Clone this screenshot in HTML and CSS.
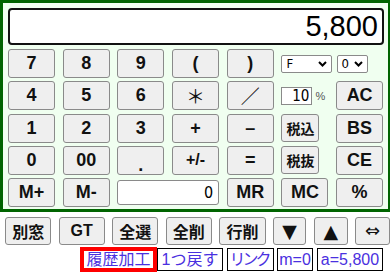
FILE: index.html
```html
<!DOCTYPE html>
<html lang="ja">
<head>
    <meta charset="UTF-8">
    <meta name="viewport" content="width=device-width, initial-scale=1.0">
    <title>電卓</title>
    <link rel="stylesheet" href="styles.css">
</head>
<body>
    <div class="calc">
        <div class="display">5,800</div>
        <div class="keys">
            <button class="key">7</button>
            <button class="key">8</button>
            <button class="key">9</button>
            <button class="key">(</button>
            <button class="key">)</button>
            <div class="opts">
                <select class="sel sel-f"><option>F</option></select>
                <select class="sel sel-n"><option>0</option></select>
            </div>

            <button class="key">4</button>
            <button class="key">5</button>
            <button class="key">6</button>
            <button class="key op">＊</button>
            <button class="key op">／</button>
            <div class="tax"><input class="rate" type="text" value="10"><span class="pct">%</span></div>
            <button class="key">AC</button>

            <button class="key">1</button>
            <button class="key">2</button>
            <button class="key">3</button>
            <button class="key">+</button>
            <button class="key">–</button>
            <div class="cell"><button class="key jp">税込</button></div>
            <button class="key">BS</button>

            <button class="key">0</button>
            <button class="key">00</button>
            <button class="key dot">.</button>
            <button class="key small">+/-</button>
            <button class="key">=</button>
            <div class="cell"><button class="key jp">税抜</button></div>
            <button class="key">CE</button>

            <button class="key">M+</button>
            <button class="key">M-</button>
            <input class="memory" type="text" value="0">
            <button class="key">MR</button>
            <button class="key">MC</button>
            <button class="key">%</button>
        </div>
    </div>

    <div class="tools">
        <button class="tool">別窓</button>
        <button class="tool">GT</button>
        <button class="tool">全選</button>
        <button class="tool">全削</button>
        <button class="tool">行削</button>
        <button class="tool arrow w1">▼</button>
        <button class="tool arrow w2">▲</button>
        <button class="tool swap">⇔</button>
    </div>

    <div class="links">
        <span class="link hot">履歴加工</span>
        <span class="link undo">1つ戻す</span>
        <span class="link url">リンク</span>
        <span class="link mem">m=0</span>
        <span class="link ans">a=5,800</span>
    </div>
</body>
</html>
```

FILE: styles.css
```css
body{
    margin: 0;
    background: #fff;
    font-family: "Liberation Sans", "Noto Sans CJK JP", sans-serif;
}
.calc{
    width: 391px;
    box-sizing: border-box;
    border: 3px solid #006400;
    background: #f0fff0;
    padding: 5px 4px 2px 5px;
}
.display{
    height: 37px;
    box-sizing: border-box;
    border: 2px solid #111;
    border-radius: 4px;
    background: #fff;
    text-align: right;
    font-size: 29px;
    line-height: 33px;
    padding-right: 4px;
    color: #000;
}
.keys{
    display: grid;
    grid-template-columns: repeat(7, 47px);
    grid-auto-rows: 29px;
    column-gap: 7.7px;
    row-gap: 3.25px;
    margin-top: 4px;
}
.key{
    margin: 0;
    padding: 0;
    background: #efefef;
    border: 1px solid #8a8a8a;
    border-radius: 3px;
    font-family: "Liberation Sans", "Noto Sans CJK JP", sans-serif;
    font-weight: bold;
    font-size: 18px;
    color: #111;
}
.op{
    font-weight: normal;
    font-size: 19px;
}
.dot{
    padding-top: 8px;
}
.small{
    font-size: 16px;
}
.opts{
    grid-column: 6 / 8;
    display: flex;
    align-items: center;
    gap: 5px;
}
.sel{
    appearance: none;
    -webkit-appearance: none;
    height: 18px;
    box-sizing: border-box;
    border: 1px solid #8a8a8a;
    border-radius: 2px;
    background: #fff url("data:image/svg+xml,%3Csvg xmlns='http://www.w3.org/2000/svg' width='9' height='6' viewBox='0 0 9 6'%3E%3Cpath d='M1 1l3.5 3.5L8 1' fill='none' stroke='%23000' stroke-width='2'/%3E%3C/svg%3E") no-repeat right 4px center;
    font-family: "Liberation Sans Narrow", "DejaVu Sans Condensed", sans-serif;
    font-size: 13px;
    line-height: 16px;
    padding: 0 0 0 4px;
    color: #000;
}
.sel-f{
    width: 51px;
}
.sel-n{
    width: 31px;
    padding-left: 3px;
}
.tax{
    display: flex;
    align-items: center;
}
.rate{
    width: 31px;
    height: 18px;
    box-sizing: border-box;
    border: 1px solid #8a8a8a;
    padding: 0 2px 0 0;
    text-align: right;
    font-family: "Liberation Sans Narrow", "DejaVu Sans Condensed", sans-serif;
    font-size: 15px;
    background: #fff;
    color: #000;
}
.pct{
    font-size: 11px;
    color: #555;
    margin-left: 3px;
}
.cell{
    display: flex;
    align-items: center;
}
.cell .key{
    width: 38px;
    height: 28px;
}
.jp{
    font-size: 14px;
}
.memory{
    grid-column: span 2;
    margin: 2px 0;
    box-sizing: border-box;
    border: 1px solid #8a8a8a;
    border-radius: 3px;
    background: #fff;
    text-align: right;
    padding: 0 5px 0 0;
    font-family: "Liberation Sans Narrow", "DejaVu Sans Condensed", sans-serif;
    font-size: 16px;
    color: #000;
}
.tools{
    display: flex;
    gap: 7.3px;
    padding-left: 5px;
    margin-top: 4.5px;
}
.tool{
    width: 46.5px;
    height: 28.5px;
    margin: 0;
    padding: 0;
    background: #efefef;
    border: 1px solid #8a8a8a;
    border-radius: 3px;
    font-family: "Liberation Sans", "Noto Sans CJK JP", sans-serif;
    font-weight: bold;
    font-size: 16px;
    color: #111;
}
.arrow{
    font-family: "DejaVu Sans", sans-serif;
    font-size: 19px;
}
.w1{
    width: 33.5px;
}
.w2{
    width: 34.5px;
}
.swap{
    width: 35px;
    font-family: "DejaVu Sans", sans-serif;
    font-weight: normal;
    font-size: 18px;
}
.links{
    display: flex;
    align-items: center;
    padding-left: 80px;
    margin-top: 2px;
    height: 25px;
}
.link{
    box-sizing: border-box;
    height: 23px;
    border: 1px solid #000;
    background: #fff;
    color: #4a30e0;
    font-size: 16px;
    line-height: 21px;
    text-align: center;
    white-space: nowrap;
}
.hot{
    width: 77px;
    height: 25px;
    border: 4px solid #f00;
    line-height: 17px;
}
.undo{
    width: 66px;
}
.url{
    width: 47px;
    margin-left: 4px;
    letter-spacing: -3px;
    text-indent: -3px;
}
.mem{
    width: 36px;
    margin-left: 3px;
    font-family: "Liberation Sans", sans-serif;
}
.ans{
    width: 66px;
    margin-left: 4px;
    font-family: "Liberation Sans", sans-serif;
}
```
